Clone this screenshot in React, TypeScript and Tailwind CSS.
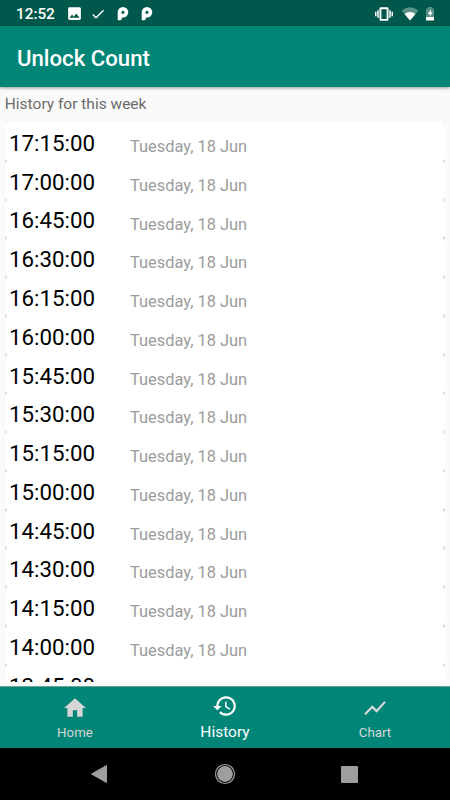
import clsx from 'clsx'

const times = [
  '17:15:00',
  '17:00:00',
  '16:45:00',
  '16:30:00',
  '16:15:00',
  '16:00:00',
  '15:45:00',
  '15:30:00',
  '15:15:00',
  '15:00:00',
  '14:45:00',
  '14:30:00',
  '14:15:00',
  '14:00:00',
  '13:45:00',
]

const tabs = [
  {
    label: 'Home',
    path: 'M10 20v-6h4v6h5v-8h3L12 3 2 12h3v8z',
  },
  {
    label: 'History',
    path: 'M13 3c-4.97 0-9 4.03-9 9H1l3.89 3.89.07.14L9 12H6c0-3.87 3.13-7 7-7s7 3.13 7 7-3.13 7-7 7c-1.93 0-3.68-.79-4.94-2.06l-1.42 1.42C8.27 19.99 10.51 21 13 21c4.97 0 9-4.03 9-9s-4.03-9-9-9zm-1 5v5l4.28 2.54.72-1.21-3.5-2.08V8H12z',
  },
  {
    label: 'Chart',
    path: 'M3.5 18.49l6-6.01 4 4L22 6.92l-1.41-1.41-7.09 7.97-4-4L2 16.99z',
  },
]

const ParkingIcon = ({ className }: { className?: string }) => (
  <svg viewBox="0 0 12 14" className={clsx('h-[14px] w-[12px]', className)}>
    <path
      fill="white"
      fillRule="evenodd"
      d="M6 0a5.300 5.300 0 0 1 0 10.600H5V11a2.200 2.200 0 0 1-2.200 2.300H.7V5.300A5.300 5.300 0 0 1 6 0zM5 6.800H6A1.500 1.500 0 1 0 4.500 5.300L4.500 6.800z"
    />
  </svg>
)

const StatusBar = () => (
  <div className="flex h-[26px] shrink-0 items-center bg-[#00574b] pt-px pl-4 text-white">
    <span className="w-[39px] pt-[3px] text-[15.3px] leading-none font-medium whitespace-nowrap">12:52</span>
    <svg viewBox="0 0 24 24" className="ml-[11px] h-[17px] w-[17px]" fill="white">
      <path d="M21 19V5c0-1.100-.9-2-2-2H5c-1.100 0-2 .9-2 2v14c0 1.100.9 2 2 2h14c1.100 0 2-.9 2-2zM8.500 13.500l2.500 3.010L14.500 12l4.500 6H5l3.500-4.500z" />
    </svg>
    <svg viewBox="0 0 24 24" className="ml-[7px] h-4 w-4" fill="white">
      <path d="M9 16.170L4.830 12l-1.420 1.410L9 19 21 7l-1.410-1.410z" />
    </svg>
    <ParkingIcon className="ml-[11px]" />
    <ParkingIcon className="ml-3" />

    {/* Vibrate, wifi, battery */}
    <svg viewBox="0 0 24 24" className="mr-2 ml-auto h-[18px] w-[18px]" fill="white">
      <path d="M0 15h2V9H0v6zm3 2h2V7H3v10zm19-8v6h2V9h-2zm-3 8h2V7h-2v10zM16.500 3h-9C6.670 3 6 3.670 6 4.500v15c0 .83.670 1.500 1.500 1.500h9c.83 0 1.500-.67 1.500-1.500v-15c0-.83-.67-1.500-1.500-1.500zM15.500 18.500h-7v-13h7v13z" />
    </svg>
    <svg viewBox="0 0 18 14" className="mr-[6px] h-[14px] w-[18px]" fill="white">
      <path fillOpacity=".35" d="M.6 3.500Q9-2.800 17.400 3.500L9 13.500z" />
      <path d="M3.500 7Q9 3.200 14.500 7L9 13.500z" />
    </svg>
    <svg viewBox="0 0 10 14" className="mr-[15px] h-[14px] w-[10px]" fill="white">
      <path fillOpacity=".35" d="M3 0h4v1.500h2V10H1V1.500h2z" />
      <path d="M1 10h8v3.500H1z" />
      <path d="M6 2.500L2.800 7h2v2.500L7.800 5.500H6z" />
    </svg>
  </div>
)

const HistoryRow = ({ time }: { time: string }) => (
  <li className="flex h-[38.77px] shrink-0 items-center rounded-[4px] bg-white pl-[4.200px]">
    <span className="w-[121px] pt-[3.400px] text-[22.3px] leading-none text-black">{time}</span>
    <span className="pt-[11.600px] text-[16.4px] leading-none text-[#9c9c9c]">Tuesday, 18 Jun</span>
  </li>
)

const App = () => {
  const active = 'History'

  return (
    <div className="flex h-[800px] w-[450px] flex-col overflow-hidden bg-[#fafafa] font-['Roboto',sans-serif]">
      <StatusBar />
      <header className="z-10 flex h-[61px] shrink-0 items-center bg-[#008577] pt-[3px] pl-[17px] shadow-[0_1px_3px_rgba(0,0,0,0.4)]">
        <h1 className="text-[22.2px] leading-8 font-medium text-white">Unlock Count</h1>
      </header>

      <main className="flex h-[595px] shrink-0 flex-col px-[4.800px]">
        <p className="h-[35px] pt-[9px] text-[15.5px] leading-4 text-[#6b6b6b]">History for this week</p>
        <ul className="flex flex-1 flex-col overflow-hidden rounded-t-[2px] bg-[#dcdcdc]">
          {times.map((time) => (
            <HistoryRow key={time} time={time} />
          ))}
        </ul>
      </main>

      {/* Bottom navigation */}
      <nav className="mt-[4px] flex h-[62px] shrink-0 border-t border-[#6f9f98] bg-[#008577]">
        {tabs.map((tab) => {
          const isActive = tab.label === active
          return (
            <div
              key={tab.label}
              className={clsx(
                'flex flex-1 flex-col items-center',
                isActive ? 'pt-[6px] text-white' : 'pt-[8px] text-[#d6d6d6]'
              )}
            >
              <svg viewBox="0 0 24 24" className="h-[26px] w-[26px]" fill="currentColor">
                <path d={tab.path} />
              </svg>
              <span className={clsx('leading-4', isActive ? 'mt-[5px] text-[15.5px]' : 'mt-[4px] text-[13.3px]')}>
                {tab.label}
              </span>
            </div>
          )
        })}
      </nav>

      {/* System buttons */}
      <div className="flex h-[52px] shrink-0 items-center justify-center bg-black pr-[2px]">
        <svg viewBox="0 0 18 20" className="h-5 w-[18px]" fill="#9e9e9e">
          <path d="M1.500 10L16.500 1.500v17z" stroke="#9e9e9e" strokeLinejoin="round" />
        </svg>
        <svg viewBox="0 0 22 22" className="mr-[105px] ml-[106px] h-[22px] w-[22px]">
          <circle cx="11" cy="11" r="9.500" fill="none" stroke="#9e9e9e" strokeWidth="1.200" />
          <circle cx="11" cy="11" r="7.900" fill="#9e9e9e" />
        </svg>
        <div className="h-[17px] w-[17px] rounded-[1px] bg-[#9e9e9e]" />
      </div>
    </div>
  )
}

export default App
